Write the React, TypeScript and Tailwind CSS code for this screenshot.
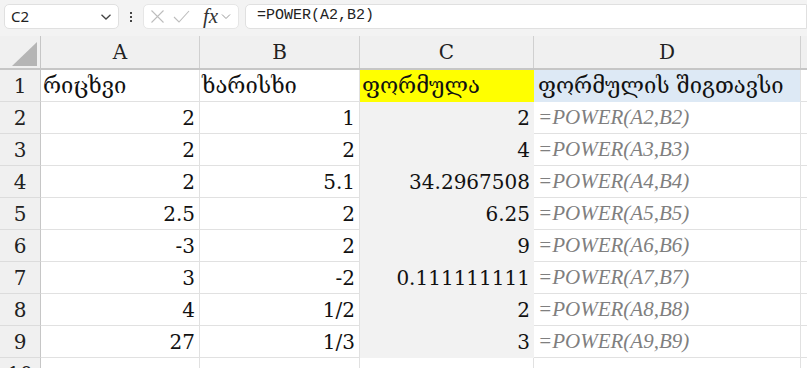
import React from "react";

const serif = { fontFamily: '"DejaVu Serif", "Liberation Serif", serif' };

type Row = { a: string; b: string; c: string; d: string };
const rows: Row[] = [
  { a: "2", b: "1", c: "2", d: "=POWER(A2,B2)" },
  { a: "2", b: "2", c: "4", d: "=POWER(A3,B3)" },
  { a: "2", b: "5.1", c: "34.2967508", d: "=POWER(A4,B4)" },
  { a: "2.5", b: "2", c: "6.25", d: "=POWER(A5,B5)" },
  { a: "-3", b: "2", c: "9", d: "=POWER(A6,B6)" },
  { a: "3", b: "-2", c: "0.111111111", d: "=POWER(A7,B7)" },
  { a: "4", b: "1/2", c: "2", d: "=POWER(A8,B8)" },
  { a: "27", b: "1/3", c: "3", d: "=POWER(A9,B9)" },
];

function RowHead({ n }: { n: number }) {
  return (
    <div className="w-[41px] shrink-0 h-full flex items-center justify-center bg-[#f0f0f0] border-r border-r-[#c6c6c6] border-b border-b-[#dcdcdc] text-[20px] text-[#222]">
      {n}
    </div>
  );
}

export default function App() {
  return (
    <div className="w-[807px] h-[368px] overflow-hidden bg-white" style={serif}>
      {/* toolbar */}
      <div className="h-[36px] bg-[#f3f3f3] flex items-start pt-[4px] relative">
        <div
          className="ml-[4px] w-[115px] h-[25px] bg-white border border-[#e0e0e0] rounded-[5px] flex items-center justify-between pl-[6px] pr-[6px] text-[15px] text-[#222]"
          style={{ fontFamily: '"Noto Sans", "DejaVu Sans", sans-serif' }}
        >
          <span>C2</span>
          <svg width="12" height="8" viewBox="0 0 12 8" fill="none">
            <path d="M1.5 1.8 L6 6 L10.5 1.8" stroke="#444" strokeWidth="1.3" />
          </svg>
        </div>
        <div className="w-[24px] h-[25px] flex flex-col items-center justify-center gap-[2px]">
          <div className="w-[2px] h-[2px] bg-[#444]" />
          <div className="w-[2px] h-[2px] bg-[#444]" />
          <div className="w-[2px] h-[2px] bg-[#444]" />
        </div>
        <div className="w-[96px] h-[25px] bg-white border border-[#e6e6e6] rounded-[5px] flex items-center pl-[6px] gap-[8px]">
          <svg width="15" height="15" viewBox="0 0 15 15" fill="none">
            <path d="M1.5 1.5 L13.5 13.5 M13.5 1.5 L1.5 13.5" stroke="#bdbdbd" strokeWidth="1.1" />
          </svg>
          <svg width="17" height="13" viewBox="0 0 17 13" fill="none">
            <path d="M1 7 L6 12 L16 1" stroke="#bdbdbd" strokeWidth="1.1" />
          </svg>
          <span
            className="italic text-[21px] leading-none text-[#333] ml-[5px]"
            style={{ fontFamily: '"Liberation Serif", serif' }}
          >
            fx
          </span>
          <svg width="10" height="7" viewBox="0 0 10 7" fill="none" className="-ml-[5px]">
            <path d="M1 1.5 L5 5.5 L9 1.5" stroke="#999" strokeWidth="1" />
          </svg>
        </div>
        <div
          className="ml-[6px] flex-1 h-[25px] bg-white border border-[#e0e0e0] rounded-l-[5px] flex items-center pl-[11px] text-[15px] text-[#222]"
          style={{ fontFamily: '"Liberation Mono", monospace' }}
        >
          =POWER(A2,B2)
        </div>
      </div>

      {/* column header */}
      <div className="h-[34px] flex bg-[#f0f0f0] border-b-2 border-b-[#c6c6c6] text-[20px] text-[#222]">
        <div className="w-[41px] shrink-0 h-full relative border-r border-r-[#c6c6c6]">
          <svg width="26" height="24" viewBox="0 0 26 24" className="absolute left-[12px] top-[6px]">
            <polygon points="25,0 25,24 0,24" fill="#b5b5b5" />
          </svg>
        </div>
        <div className="w-[159px] shrink-0 flex items-center justify-center border-r border-r-[#d0d0d0]">A</div>
        <div className="w-[160px] shrink-0 flex items-center justify-center border-r border-r-[#d0d0d0]">B</div>
        <div className="w-[174px] shrink-0 flex items-center justify-center border-r border-r-[#d0d0d0]">C</div>
        <div className="w-[267px] shrink-0 flex items-center justify-center border-r border-r-[#d0d0d0]">D</div>
        <div className="flex-1" />
      </div>

      {/* row 1 */}
      <div className="h-[32px] flex text-[22px] text-[#111]">
        <RowHead n={1} />
        <div className="w-[159px] shrink-0 flex items-center pl-[2px] border-r border-b border-[#e1e1e1]">რიცხვი</div>
        <div className="w-[160px] shrink-0 flex items-center pl-[2px] border-r border-b border-[#e1e1e1]">ხარისხი</div>
        <div className="w-[174px] shrink-0 flex items-center pl-[2px] bg-[#ffff00] border-r border-b border-[#ffff00]">ფორმულა</div>
        <div className="w-[267px] shrink-0 flex items-center pl-[4px] bg-[#dde9f5] border-r border-b border-r-[#e1e1e1] border-b-[#dde9f5]">
          ფორმულის შიგთავსი
        </div>
        <div className="flex-1 border-b border-[#e1e1e1]" />
      </div>

      {rows.map((r, i) => (
        <div key={i} className="h-[32px] flex text-[20px] text-[#111]">
          <RowHead n={i + 2} />
          <div className="w-[159px] shrink-0 flex items-center justify-end pr-[4px] border-r border-b border-[#e1e1e1]">{r.a}</div>
          <div className="w-[160px] shrink-0 flex items-center justify-end pr-[4px] border-r border-b border-[#e1e1e1]">{r.b}</div>
          <div className="w-[174px] shrink-0 flex items-center justify-end pr-[3px] bg-[#f2f2f2] border-r border-b border-[#f2f2f2]">{r.c}</div>
          <div
            className="w-[267px] shrink-0 flex items-center pl-[4px] italic text-[21px] text-[#7f7f7f] border-r border-b border-[#e1e1e1]"
            style={{ fontFamily: '"Liberation Serif", serif' }}
          >
            {r.d}
          </div>
          <div className="flex-1 border-b border-[#e1e1e1]" />
        </div>
      ))}

      {/* row 10 */}
      <div className="h-[32px] flex text-[20px] text-[#111]">
        <RowHead n={10} />
        <div className="w-[159px] shrink-0 border-r border-b border-[#e1e1e1]" />
        <div className="w-[160px] shrink-0 border-r border-b border-[#e1e1e1]" />
        <div className="w-[174px] shrink-0 border-r border-b border-[#e1e1e1]" />
        <div className="w-[267px] shrink-0 border-r border-b border-[#e1e1e1]" />
        <div className="flex-1 border-b border-[#e1e1e1]" />
      </div>
    </div>
  );
}
